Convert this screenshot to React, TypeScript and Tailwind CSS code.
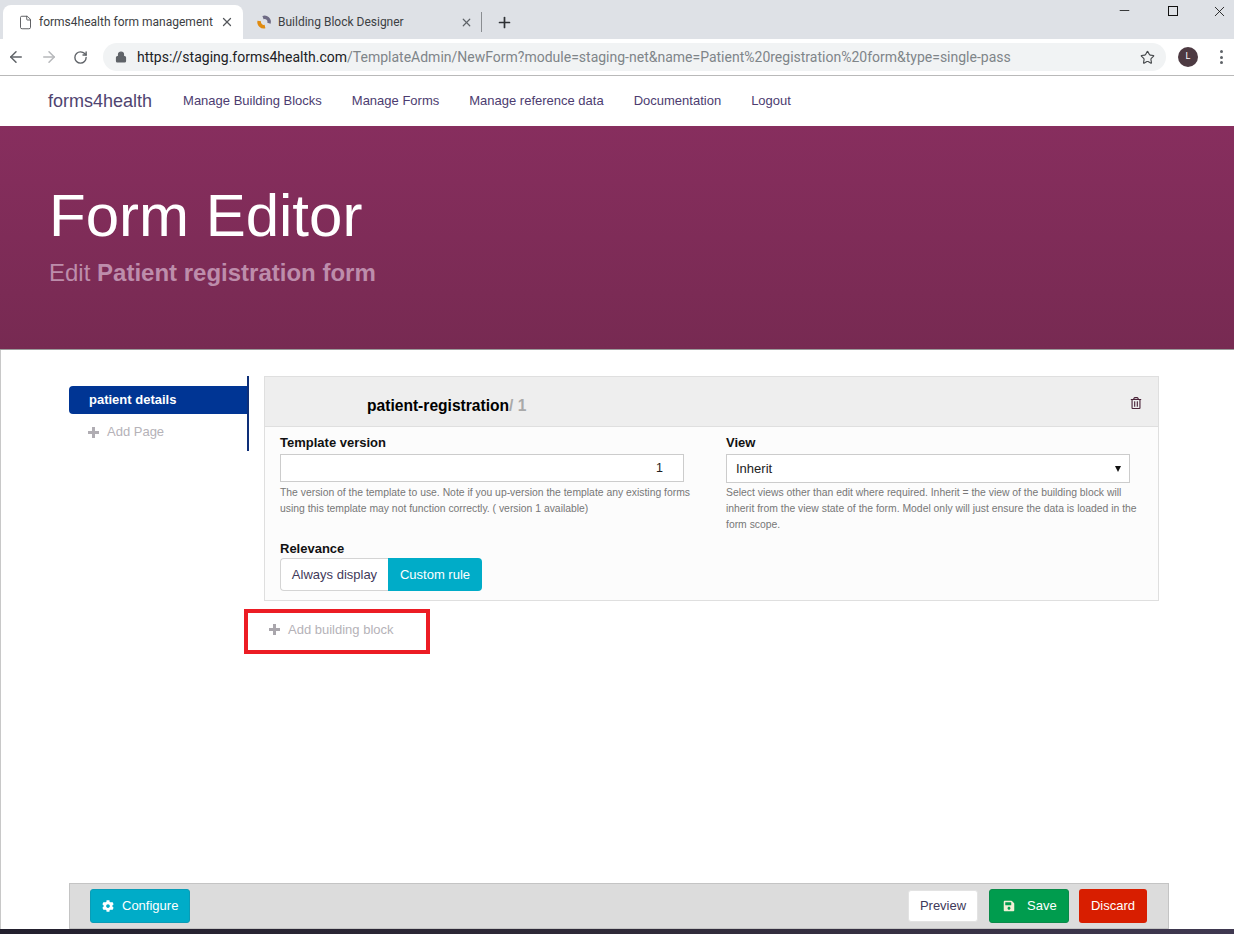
import React from "react";
import { FaCog, FaSave, FaRegTrashAlt } from "react-icons/fa";
import { ArrowLeft, ArrowRight, RotateCw, Lock, Star, X, Plus, Minus, File } from "lucide-react";

const Chrome = "[font-family:'Roboto','Noto_Sans',sans-serif]";

function BoldPlus({ className }: { className?: string }) {
  return (
    <svg width="11" height="11" viewBox="0 0 11 11" className={className}>
      <path d="M4 0h3v4h4v3H7v4H4V7H0V4h4z" fill="currentColor" />
    </svg>
  );
}

function Tabs() {
  return (
    <div className="h-[39px] bg-[#dee1e6] flex shrink-0 relative">
      <div className="w-[3px]" />
      <div className="mt-[5px] h-[34px] w-[240px] bg-white rounded-t-[8px] flex items-center pl-[15px] pr-[9px]">
        <File size={15} strokeWidth={1.4} className="text-[#4a4d50] shrink-0" />
        <span className="ml-[6px] text-[12px] text-[#3c4043] whitespace-nowrap flex-1">forms4health form management</span>
        <X size={14} strokeWidth={2.2} className="text-[#55585c] -ml-[2px]" />
      </div>
      <div className="mt-[5px] h-[34px] w-[239px] flex items-center pl-[13px] pr-0">
        <svg width="16" height="16" viewBox="0 0 16 16" className="shrink-0">
          <path d="M7 3.6 A4.6 4.6 0 0 1 13 9.2" fill="none" stroke="#6f6b85" strokeWidth="3.4" />
          <path d="M9 12.6 A4.8 4.8 0 0 1 3.2 7" fill="none" stroke="#e08b10" strokeWidth="3.6" />
        </svg>
        <span className="ml-[6px] text-[12px] text-[#3c4043] whitespace-nowrap flex-1">Building Block Designer</span>
        <X size={13} strokeWidth={2.2} className="text-[#5f6368]" />
        <div className="w-px h-[20px] bg-[#8a8d91] ml-[8px]" />
      </div>
      <div className="mt-[5px] h-[34px] flex items-center ml-[14px]">
        <Plus size={17} strokeWidth={2.4} className="text-[#2e3135]" />
      </div>
      <div className="ml-auto flex items-start pt-[3px] text-[#111]">
        <div className="w-[36px] flex justify-center"><Minus size={15} strokeWidth={1.3} /></div>
        <div className="w-[62px] flex justify-center pr-[1px]"><div className="w-[10px] h-[10px] border border-[#111] mt-[3px]" /></div>
        <div className="w-[30px] flex justify-center"><X size={17} strokeWidth={1.2} /></div>
      </div>
    </div>
  );
}

function Toolbar() {
  return (
    <div className="h-[37px] bg-white border-b border-[#b9b9b9] flex items-center shrink-0">
      <ArrowLeft size={18} strokeWidth={2} className="ml-[7px] text-[#5f6368]" />
      <ArrowRight size={18} strokeWidth={2} className="ml-[15px] text-[#b6b8bb]" />
      <RotateCw size={15} strokeWidth={2.2} className="ml-[15px] text-[#5f6368]" />
      <div className="ml-[15px] w-[1063px] h-[28px] bg-[#f1f3f4] rounded-[14px] flex items-center pl-[12px] pr-[11px]">
        <Lock size={12} strokeWidth={2.4} className="text-[#5f6368] fill-[#5f6368]" />
        <span className="ml-[10px] text-[14px] whitespace-nowrap text-[#7f8589] flex-1">
          <span className="text-[#202124]">https://staging.forms4health.com</span>/TemplateAdmin/NewForm?module=staging-net&amp;name=Patient%20registration%20form&amp;type=single-pass
        </span>
        <Star size={15} strokeWidth={1.8} className="text-[#44474a]" />
      </div>
      <div className="ml-[12px] w-[20px] h-[20px] rounded-full bg-[#4d3a42] text-white text-[9px] flex items-center justify-center">L</div>
      <div className="ml-[22px] flex flex-col gap-[2.5px]">
        <span className="w-[3px] h-[3px] rounded-full bg-[#5f6368]" />
        <span className="w-[3px] h-[3px] rounded-full bg-[#5f6368]" />
        <span className="w-[3px] h-[3px] rounded-full bg-[#5f6368]" />
      </div>
    </div>
  );
}

function Nav() {
  const items = ["Manage Building Blocks", "Manage Forms", "Manage reference data", "Documentation", "Logout"];
  return (
    <nav className="h-[50px] bg-white flex items-center pl-[48px] shrink-0 text-[#4c3c70]">
      <span className="text-[18px] mr-[31px] text-[#4f4470]">forms4health</span>
      <div className="flex gap-[30px] text-[13px]">
        {items.map((i) => (
          <span key={i} className="whitespace-nowrap">{i}</span>
        ))}
      </div>
    </nav>
  );
}

function Hero() {
  return (
    <header className="h-[224px] bg-gradient-to-b from-[#872e5e] to-[#772a52] border-b border-[#9a9a9a] shrink-0 pl-[49px] pt-[56px] text-white">
      <h1 className="text-[60px] leading-[68px]">Form Editor</h1>
      <p className="mt-[7px] text-[24px] leading-[32px] text-[#bd8dab]">
        Edit <strong>Patient registration form</strong>
      </p>
    </header>
  );
}

function Sidebar() {
  return (
    <aside className="w-[180px] h-[75px] shrink-0 border-r-2 border-[#0e2f78] pt-[10px]">
      <div className="h-[28px] bg-[#003594] rounded-l-[4px] text-white font-bold text-[13px] leading-[27px] pl-[20px]">patient details</div>
      <div className="flex items-center h-[36px] pl-[19px] text-[#b5b2b8] text-[13px]">
        <BoldPlus className="text-[#b0adb3]" />
        <span className="ml-[8px]">Add Page</span>
      </div>
    </aside>
  );
}

function Panel() {
  return (
    <section className="border border-[#dfdfdf] bg-[#fcfcfc] w-[895px] h-[225px] flex flex-col">
      <div className="h-[50px] bg-[#eeeeee] border-b border-[#dfdfdf] flex items-center shrink-0 pr-[16px] pt-[8px]">
        <span className="ml-[102px] text-[15.6px] font-bold text-black">patient-registration</span>
        <span className="text-[15.6px] font-bold text-[#a9a9a9]">/ 1</span>
        <FaRegTrashAlt size={12} className="ml-auto text-[#4a2338] -mt-[6px]" />
      </div>
      <div className="flex flex-1 pl-[15px]">
        <div className="w-[446px] shrink-0">
          <label className="block mt-[7px] text-[13px] leading-[18px] font-bold text-[#111]">Template version</label>
          <div className="mt-[2px] w-[404px] h-[28px] border border-[#cccccc] bg-white text-[12.5px] leading-[26px] text-right pr-[20px] text-[#222]">1</div>
          <p className="mt-[3px] text-[10.38px] leading-[16px] text-[#777] w-[420px]">
            The version of the template to use. Note if you up-version the template any existing forms using this template may not function correctly. ( version 1 available)
          </p>
          <label className="block mt-[23px] text-[13px] leading-[18px] font-bold text-[#111]">Relevance</label>
          <div className="flex h-[33px] text-[13px]">
            <div className="w-[108px] border border-[#d4d4d4] border-r-0 rounded-l-[4px] bg-white text-[#3f3a5a] flex items-center justify-center">Always display</div>
            <div className="w-[94px] bg-[#00acc8] rounded-r-[4px] text-white flex items-center justify-center">Custom rule</div>
          </div>
        </div>
        <div className="w-[412px] shrink-0">
          <label className="block mt-[7px] text-[13px] leading-[18px] font-bold text-[#111]">View</label>
          <div className="mt-[2px] w-[404px] h-[29px] border border-[#cccccc] bg-white flex items-center pl-[9px] pr-[8px] text-[13px] text-[#222]">
            <span className="flex-1">Inherit</span>
            <span className="w-0 h-0 border-l-[3.5px] border-r-[3.5px] border-t-[6px] border-l-transparent border-r-transparent border-t-[#111]" />
          </div>
          <p className="mt-[2px] text-[10.38px] leading-[16px] text-[#777]">
            Select views other than edit where required. Inherit = the view of the building block will inherit from the view state of the form. Model only will just ensure the data is loaded in the form scope.
          </p>
        </div>
      </div>
    </section>
  );
}

function Footer() {
  return (
    <footer className="mt-auto ml-[68px] w-[1100px] h-[46px] bg-[#dcdcdc] border border-[#c4c4c4] flex items-center pl-[20px] pr-[21px] text-[13px] shrink-0">
      <div className="w-[100px] h-[34px] bg-[#00acc8] rounded-[3px] border border-[#0a9cb6] text-white flex items-center pl-[11px]">
        <FaCog size={12} />
        <span className="ml-[8px]">Configure</span>
      </div>
      <div className="ml-auto w-[70px] h-[32px] bg-white border border-[#e3e3e3] rounded-[3px] text-[#3f3a5a] flex items-center justify-center">Preview</div>
      <div className="ml-[11px] w-[80px] h-[34px] bg-[#009c4e] rounded-[3px] border border-[#0a8a49] text-white flex items-center pl-[13px]">
        <FaSave size={12} className="text-[#f1efd6]" />
        <span className="ml-[12px]">Save</span>
      </div>
      <div className="ml-[10px] w-[68px] h-[34px] bg-[#d81e00] rounded-[3px] text-white flex items-center justify-center">Discard</div>
    </footer>
  );
}

export default function App() {
  return (
    <div className="w-[1234px] h-[934px] overflow-hidden bg-white flex flex-col [font-family:'Liberation_Sans',Arial,sans-serif]">
      <div className={Chrome}>
        <Tabs />
        <Toolbar />
      </div>
      <div className="flex-1 flex flex-col border-l border-[#c8c8c8] min-h-0">
        <div className="-ml-px"><Nav /></div>
        <div className="-ml-px"><Hero /></div>
        <div className="flex pl-[68px] pt-[26px] flex-1 min-h-0">
          <Sidebar />
          <div className="ml-[15px] flex flex-col">
            <Panel />
            <div className="-ml-[20px] mt-[8px] w-[186px] h-[45px] border-[4px] border-[#ec1c24] flex items-center pl-[21px] pb-[4px] text-[#b5b2b8] text-[13px]">
              <BoldPlus className="text-[#a9a6ac]" />
              <span className="ml-[8px]">Add building block</span>
            </div>
          </div>
        </div>
        <Footer />
      </div>
      <div className="h-[5px] bg-gradient-to-r from-[#23202e] via-[#2f2a38] to-[#3f3850] shrink-0" />
    </div>
  );
}
